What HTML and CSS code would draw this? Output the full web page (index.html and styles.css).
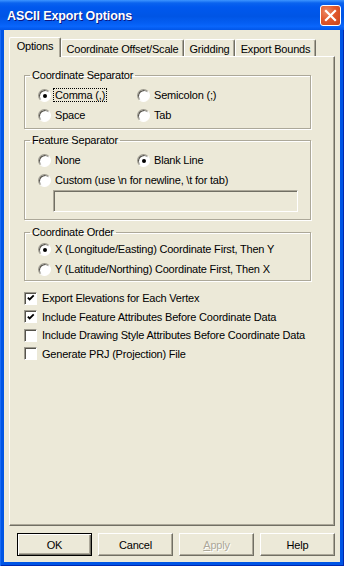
FILE: index.html
```html
<!DOCTYPE html>
<html>
<head>
<meta charset="utf-8">
<link rel="stylesheet" href="styles.css">
</head>
<body>
<div class="window">
  <div class="titlebar">
    <span class="title">ASCII Export Options</span>
    <span class="close">
      <svg width="19" height="19" viewBox="0 0 19 19"><path d="M5 5 L14 14 M14 5 L5 14" stroke="#fff" stroke-width="2.2" stroke-linecap="square"/></svg>
    </span>
  </div>
  <div class="client">
    <div class="tabs">
      <div class="tab sel t1">Options</div>
      <div class="tab t2">Coordinate Offset/Scale</div>
      <div class="tab t3">Gridding</div>
      <div class="tab t4">Export Bounds</div>
    </div>
    <div class="panel">
      <fieldset class="group g1">
        <legend>Coordinate Separator</legend>
        <div class="grid">
          <div class="opt"><span class="radio on"></span><span class="focus">Comma (,)</span></div>
          <div class="opt"><span class="radio"></span><span>Semicolon (;)</span></div>
          <div class="opt"><span class="radio"></span><span>Space</span></div>
          <div class="opt"><span class="radio"></span><span>Tab</span></div>
        </div>
      </fieldset>
      <fieldset class="group g2">
        <legend>Feature Separator</legend>
        <div class="grid">
          <div class="opt"><span class="radio"></span><span>None</span></div>
          <div class="opt"><span class="radio on"></span><span>Blank Line</span></div>
        </div>
        <div class="rows">
          <div class="opt"><span class="radio"></span><span>Custom (use \n for newline, \t for tab)</span></div>
        </div>
        <div class="field"></div>
      </fieldset>
      <fieldset class="group g3">
        <legend>Coordinate Order</legend>
        <div class="rows">
          <div class="opt"><span class="radio on"></span><span>X (Longitude/Easting) Coordinate First, Then Y</span></div>
          <div class="opt"><span class="radio"></span><span>Y (Latitude/Northing) Coordinate First, Then X</span></div>
        </div>
      </fieldset>
      <div class="checks">
        <div class="chk"><span class="box on"><svg width="11" height="11" viewBox="0 0 11 11"><path d="M2 4.5 L4 6.5 L8.5 2" stroke="#000" stroke-width="2" fill="none"/></svg></span><span>Export Elevations for Each Vertex</span></div>
        <div class="chk"><span class="box on"><svg width="11" height="11" viewBox="0 0 11 11"><path d="M2 4.5 L4 6.5 L8.5 2" stroke="#000" stroke-width="2" fill="none"/></svg></span><span>Include Feature Attributes Before Coordinate Data</span></div>
        <div class="chk"><span class="box"></span><span>Include Drawing Style Attributes Before Coordinate Data</span></div>
        <div class="chk"><span class="box"></span><span>Generate PRJ (Projection) File</span></div>
      </div>
    </div>
    <div class="buttons">
      <div class="btn default">OK</div>
      <div class="btn">Cancel</div>
      <div class="btn disabled"><span class="u">A</span>pply</div>
      <div class="btn">Help</div>
    </div>
  </div>
</div>
</body>
</html>
```
FILE: styles.css
```css
html, body {
  margin: 0;
  padding: 0;
  background: #ffffff;
}
body {
  font-family: "Liberation Sans", Arial, sans-serif;
  font-size: 11px;
  letter-spacing: -0.2px;
  color: #000;
}
.window {
  width: 344px;
  height: 566px;
  box-sizing: border-box;
  display: flex;
  flex-direction: column;
  background: #0055e5;
  box-shadow: inset 1px 0 #1a6cf5, inset -1px 0 #0028b0, inset 0 -1px #0028b0;
}
.titlebar {
  height: 30px;
  flex: none;
  display: flex;
  align-items: center;
  justify-content: space-between;
  padding: 0 3px 0 7px;
  background: linear-gradient(to bottom, #3d95ff 0, #0a63ef 3px, #0058ee 7px, #0055e5 55%, #0560f5 80%, #0a66fc 88%, #0156e8 100%);
}
.title {
  color: #fff;
  font-weight: bold;
  font-size: 12.5px;
  letter-spacing: -0.1px;
  text-shadow: 1px 1px 0 #0a1883;
  margin-top: 1px;
}
.close {
  width: 21px;
  height: 21px;
  box-sizing: border-box;
  border: 1px solid #fff;
  border-radius: 3px;
  background: radial-gradient(circle at 30% 30%, #ec8a66 0, #e2582c 45%, #c8441a 100%);
  display: flex;
  align-items: center;
  justify-content: center;
}
.close svg { display: block; }
.client {
  flex: 1;
  margin: 0 4px 4px 4px;
  background: #ece9d8;
  display: flex;
  flex-direction: column;
  padding: 7px 5px 6px 5px;
}
.tabs {
  height: 20px;
  flex: none;
  display: flex;
  align-items: flex-start;
  margin-bottom: -1px;
  position: relative;
  z-index: 1;
}
.tab {
  box-sizing: border-box;
  height: 17px;
  margin-top: 2px;
  border: 1px solid;
  border-color: #fff #716f64 transparent #fff;
  border-bottom: none;
  border-radius: 2px 2px 0 0;
  box-shadow: inset -1px 0 #aca899;
  background: #ece9d8;
  display: flex;
  align-items: center;
  justify-content: center;
  white-space: nowrap;
  padding-top: 1px;
}
.tab.sel {
  height: 20px;
  margin-top: 0;
  padding-top: 0;
  padding-bottom: 3px;
}
.t1 { width: 52px; }
.t2 { width: 123px; }
.t3 { width: 51px; }
.t4 { width: 81px; }
.panel {
  flex: 1;
  border: 1px solid;
  border-color: #fff #716f64 #716f64 #fff;
  box-shadow: inset -1px -1px #aca899;
  display: flex;
  flex-direction: column;
}
.group {
  margin: 0 23px 0 14px;
  padding: 0;
  min-width: 0;
  border: 1px solid #aca899;
  box-shadow: inset 1px 1px #fff, 1px 1px #fff;
}
.group legend {
  margin-left: 5px;
  padding: 0 2px;
  line-height: 13px;
  height: 13px;
}
.g1 { margin-top: 12px; padding: 3px 0 3px 0; }
.g2 { margin-top: 5px; padding: 3px 0 7px 0; }
.g3 { margin-top: 6px; padding: 0 0 1px 0; }
.grid {
  display: grid;
  grid-template-columns: 99px 1fr;
  padding-left: 13px;
}
.rows {
  padding-left: 13px;
}
.opt {
  height: 20px;
  display: flex;
  align-items: center;
  gap: 4px;
  white-space: nowrap;
}
.radio {
  width: 13px;
  height: 13px;
  box-sizing: border-box;
  border-radius: 50%;
  border: 1px solid;
  border-color: #9d9a8e #fff #fff #9d9a8e;
  background: #fff;
  box-shadow: inset 1px 1px 0 #55534c;
  position: relative;
  flex: none;
}
.radio.on::after {
  content: "";
  position: absolute;
  left: 4px;
  top: 4px;
  width: 4px;
  height: 4px;
  border-radius: 50%;
  background: #000;
}
.focus {
  margin-left: -2px;
  padding: 0 1px;
  border: 1px dotted #000;
  line-height: 12px;
}
.field {
  margin-left: 28px;
  width: 245px;
  height: 22px;
  box-sizing: border-box;
  border: 1px solid;
  border-color: #aca899 #fff #fff #aca899;
  box-shadow: inset 1px 1px #716f64;
  background: #ece9d8;
}
.checks {
  margin: 8px 0 0 14px;
}
.chk {
  height: 18.5px;
  display: flex;
  align-items: center;
  gap: 5px;
  white-space: nowrap;
}
.box {
  width: 13px;
  height: 13px;
  box-sizing: border-box;
  border: 1px solid;
  border-color: #9d9a8e #fff #fff #9d9a8e;
  box-shadow: inset 1px 1px #55534c;
  background: #fff;
  flex: none;
  display: flex;
  align-items: center;
  justify-content: center;
}
.box svg { display: block; margin: 1px 0 0 1px; }
.buttons {
  flex: none;
  margin-top: 7px;
  display: flex;
  justify-content: flex-end;
  gap: 6px;
}
.btn {
  width: 75px;
  height: 23px;
  box-sizing: border-box;
  border: 1px solid;
  border-color: #fff #716f64 #716f64 #fff;
  box-shadow: inset -1px -1px #aca899;
  display: flex;
  align-items: center;
  justify-content: center;
}
.btn.default {
  border: 1px solid #000;
  box-shadow: inset 1px 1px #fff, inset -1px -1px #716f64, inset -2px -2px #aca899;
}
.btn.disabled {
  color: #aca899;
  text-shadow: 1px 1px 0 #fff;
}
.u { text-decoration: underline; }
```
